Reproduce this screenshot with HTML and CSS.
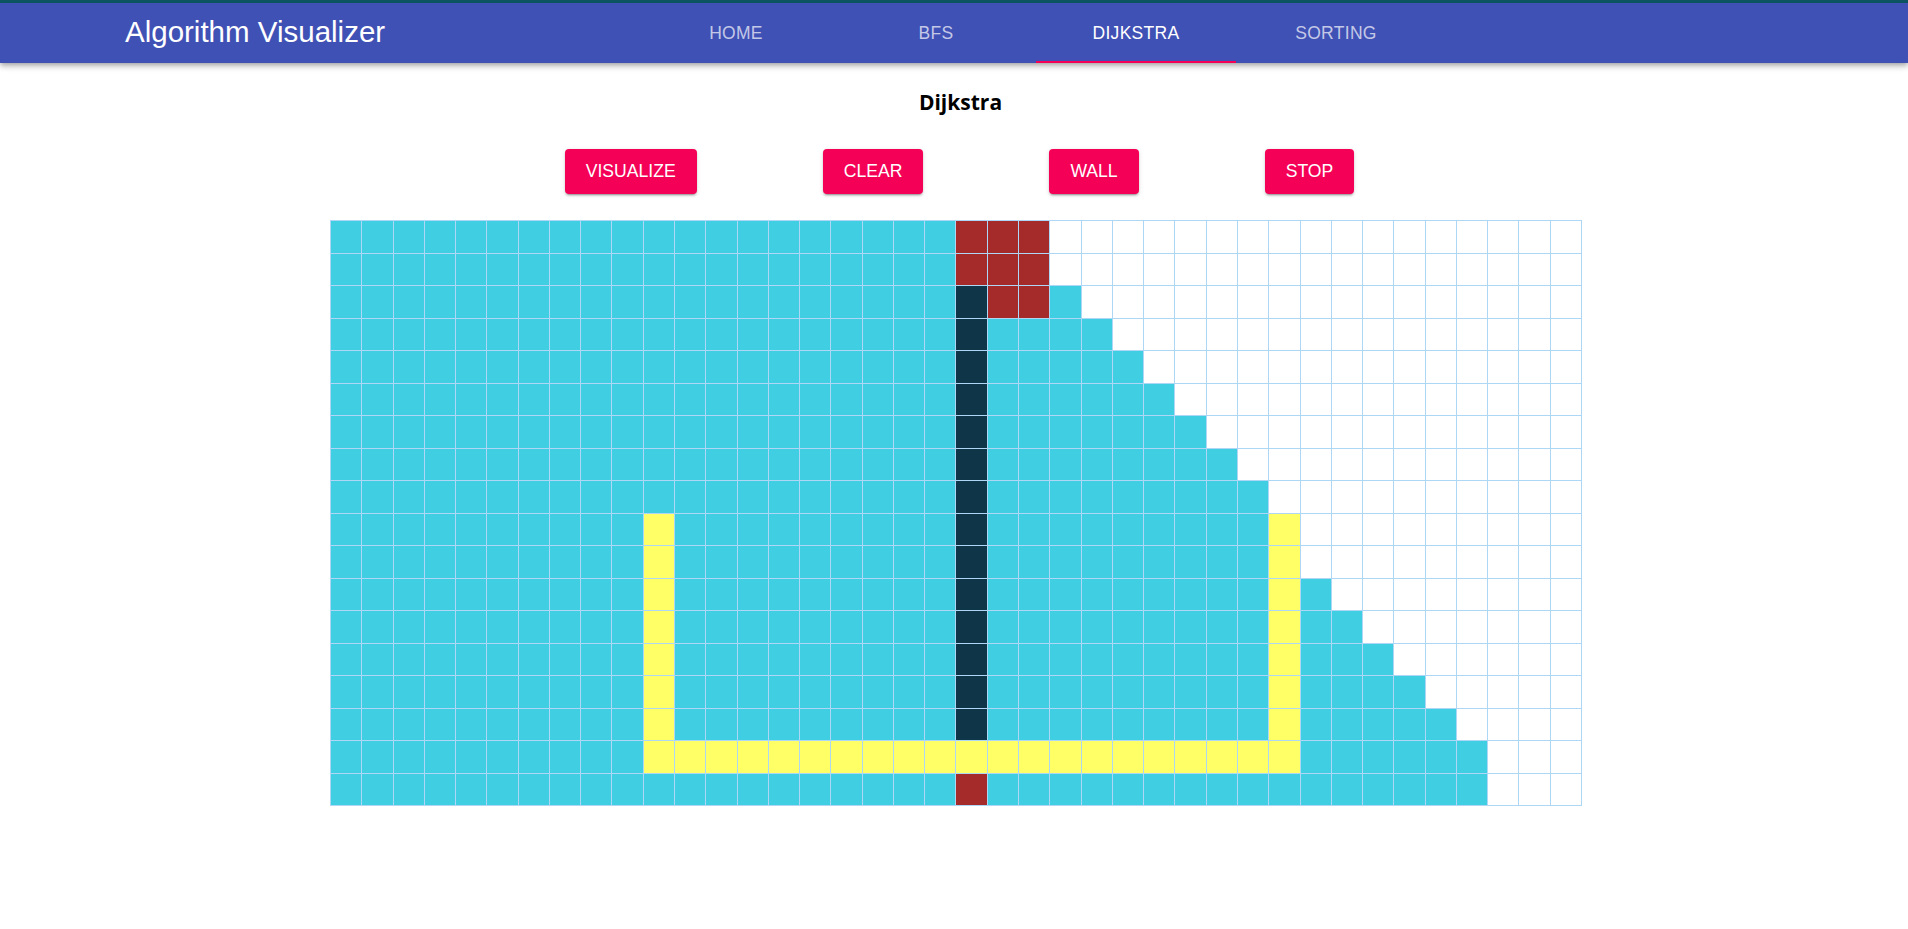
FILE: index.html
```html
<!DOCTYPE html>
<html>
<head>
<meta charset="utf-8">
<title>Algorithm Visualizer</title>
<link rel="stylesheet" href="styles.css">
</head>
<body>
<header class="appbar">
  <div class="topline"></div>
  <div class="toolbar">
    <div class="brand">Algorithm Visualizer</div>
    <nav class="tabs">
      <div class="tab">HOME</div>
      <div class="tab">BFS</div>
      <div class="tab active">DIJKSTRA</div>
      <div class="tab">SORTING</div>
    </nav>
  </div>
</header>
<main class="page">
  <h1 class="heading">Dijkstra</h1>
  <div class="actions">
    <button class="btn">VISUALIZE</button>
    <button class="btn">CLEAR</button>
    <button class="btn">WALL</button>
    <button class="btn">STOP</button>
  </div>
  <div class="board" id="board"></div>
</main>
<script src="script.js"></script>
</body>
</html>
```
FILE: styles.css
```css
* { box-sizing: border-box; }
html, body { margin: 0; padding: 0; background: #fff; }
body { font-family: "Liberation Sans", Arial, sans-serif; }

.appbar {
  background: #3f51b5;
  box-shadow: 0 2px 4px -1px rgba(0,0,0,0.2), 0 4px 5px 0 rgba(0,0,0,0.14), 0 1px 10px 0 rgba(0,0,0,0.12);
  position: relative;
  z-index: 2;
}
.topline { height: 3px; background: #0c5560; }
.toolbar {
  height: 60px;
  display: flex;
  align-items: stretch;
  padding-left: 125px;
}
.brand {
  width: 511px;
  color: #fff;
  font-size: 29.5px;
  display: flex;
  align-items: center;
  padding-bottom: 3px;
}
.tabs { display: flex; }
.tab {
  width: 200px;
  display: flex;
  align-items: center;
  justify-content: center;
  color: rgba(255,255,255,0.7);
  font-size: 17.5px;
  letter-spacing: 0.3px;
}
.tab.active {
  color: #fff;
  box-shadow: inset 0 -2px 0 #f50057;
}

.page {
  display: flex;
  flex-direction: column;
  align-items: center;
}
.heading {
  margin: 27px 0 0 13px;
  font-family: "Open Sans", sans-serif;
  font-weight: 700;
  font-size: 21px;
  line-height: 24px;
  color: #000;
}
.actions {
  margin-top: 35px;
  margin-left: 11px;
  display: flex;
  gap: 126px;
}
.btn {
  height: 45px;
  padding: 0 21px;
  border: none;
  border-radius: 4px;
  background: #f50057;
  color: #fff;
  font-family: "Liberation Sans", Arial, sans-serif;
  font-size: 17.6px;
  box-shadow: 0 3px 1px -2px rgba(0,0,0,0.2), 0 2px 2px 0 rgba(0,0,0,0.14), 0 1px 5px 0 rgba(0,0,0,0.12);
}

.board {
  margin-top: 26px;
  margin-left: 4px;
  width: 1252px;
  height: 586px;
  display: grid;
  grid-template-columns: repeat(40, 1fr);
  grid-template-rows: repeat(18, 1fr);
  border-left: 1px solid #aed6f5;
  border-top: 1px solid #aed6f5;
}
.cell {
  border-right: 1px solid #aed6f5;
  border-bottom: 1px solid #aed6f5;
  background: #fff;
}
.cell.c { background: #40cee3; }
.cell.r { background: #a52a2a; }
.cell.d { background: #0e3548; }
.cell.y { background: #ffff66; }
.cell.w { background: #fff; }
```
FILE: script.js
```js
(function () {
  var rows = [
    [["c",20],["r",3],["w",17]],
    [["c",20],["r",3],["w",17]],
    [["c",20],["d",1],["r",2],["c",1],["w",16]],
    [["c",20],["d",1],["c",4],["w",15]],
    [["c",20],["d",1],["c",5],["w",14]],
    [["c",20],["d",1],["c",6],["w",13]],
    [["c",20],["d",1],["c",7],["w",12]],
    [["c",20],["d",1],["c",8],["w",11]],
    [["c",20],["d",1],["c",9],["w",10]],
    [["c",10],["y",1],["c",9],["d",1],["c",9],["y",1],["w",9]],
    [["c",10],["y",1],["c",9],["d",1],["c",9],["y",1],["w",9]],
    [["c",10],["y",1],["c",9],["d",1],["c",9],["y",1],["c",1],["w",8]],
    [["c",10],["y",1],["c",9],["d",1],["c",9],["y",1],["c",2],["w",7]],
    [["c",10],["y",1],["c",9],["d",1],["c",9],["y",1],["c",3],["w",6]],
    [["c",10],["y",1],["c",9],["d",1],["c",9],["y",1],["c",4],["w",5]],
    [["c",10],["y",1],["c",9],["d",1],["c",9],["y",1],["c",5],["w",4]],
    [["c",10],["y",21],["c",6],["w",3]],
    [["c",20],["r",1],["c",16],["w",3]]
  ];
  var board = document.getElementById("board");
  var frag = document.createDocumentFragment();
  rows.forEach(function (runs) {
    runs.forEach(function (run) {
      for (var i = 0; i < run[1]; i++) {
        var el = document.createElement("div");
        el.className = "cell " + run[0];
        frag.appendChild(el);
      }
    });
  });
  board.appendChild(frag);
})();
```
